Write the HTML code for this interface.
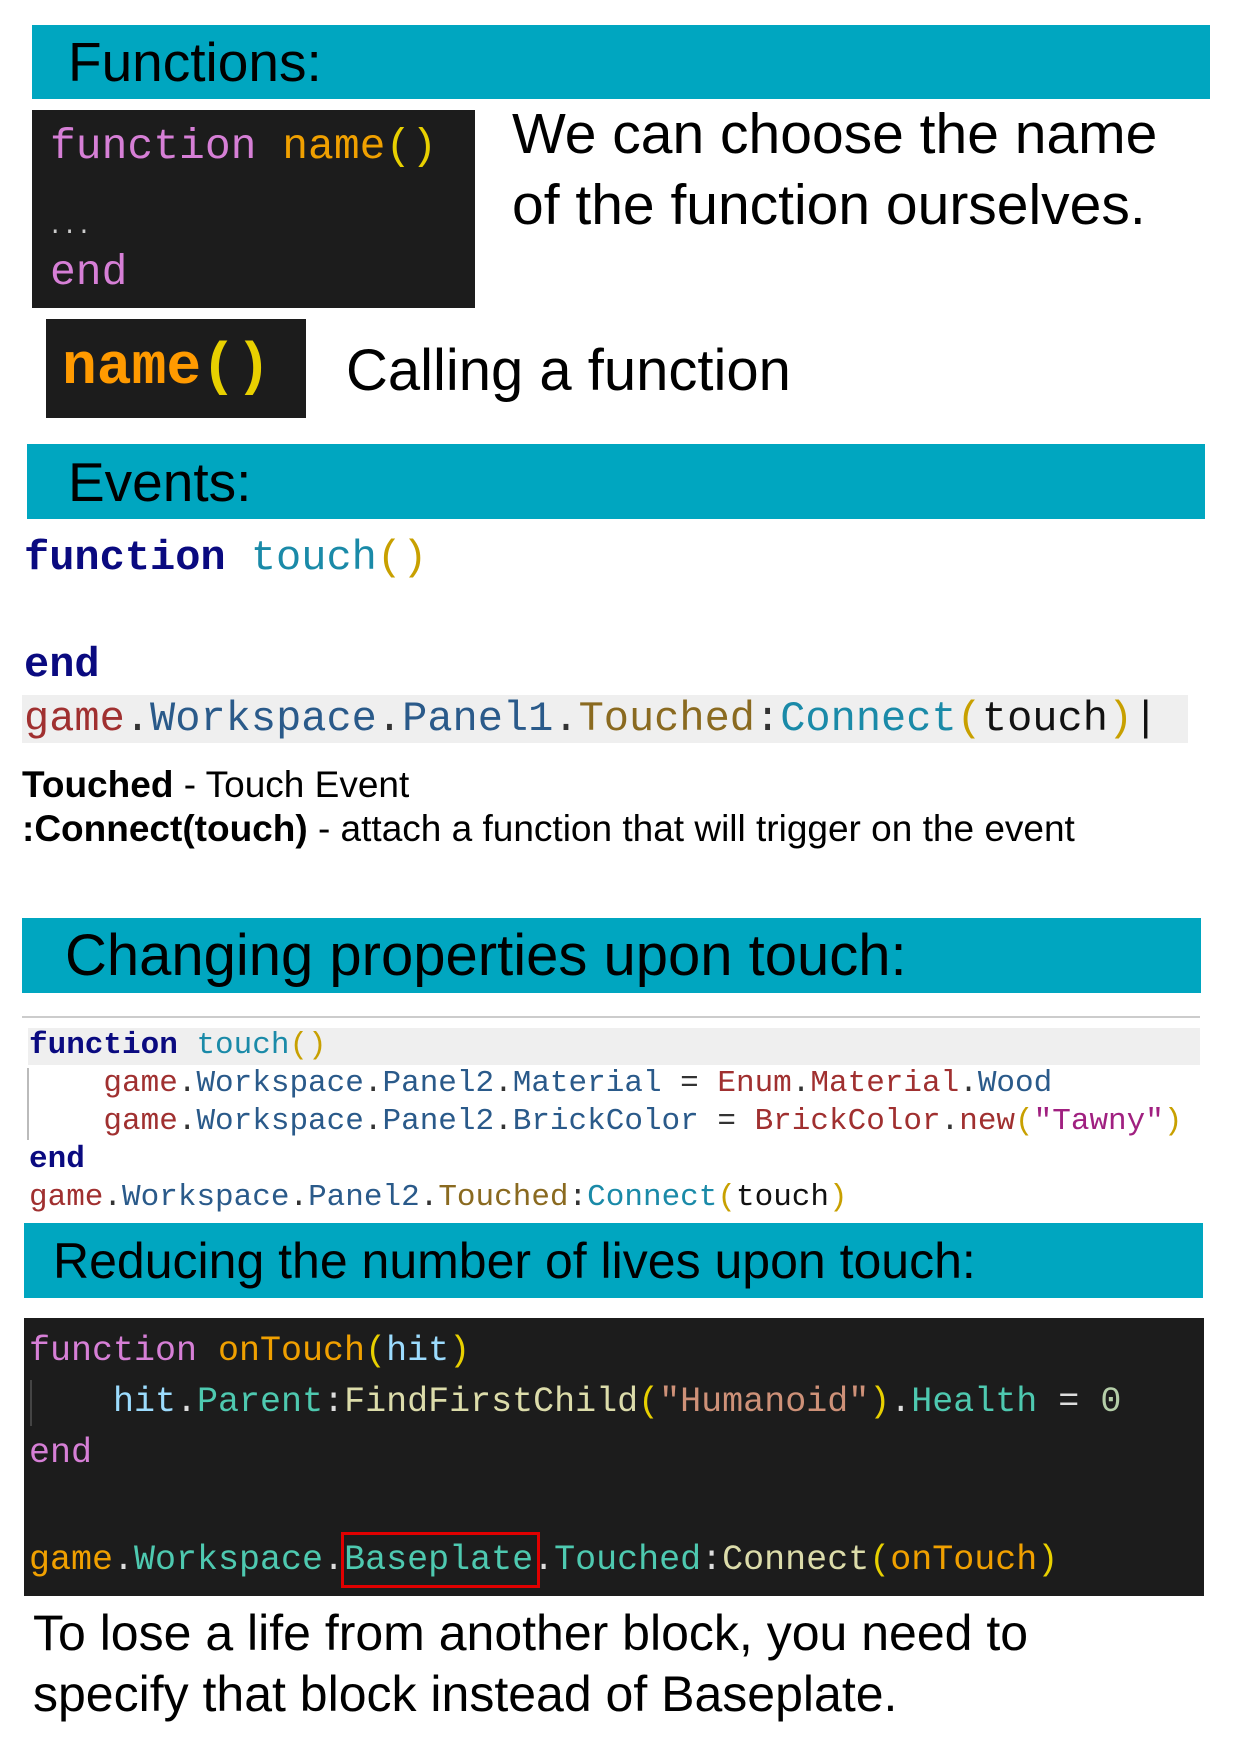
<!DOCTYPE html>
<html><head><meta charset="utf-8"><style>
body{margin:0;width:1240px;height:1748px;background:#fff;position:relative;overflow:hidden;font-family:"Liberation Sans",Arial,sans-serif;}
.a{position:absolute;white-space:pre;}
.ban{position:absolute;background:#00a6c0;}
.m{font-family:"Liberation Mono",monospace;}
.d{background:#1c1c1c;position:absolute;}
</style></head><body>
<div class="ban" style="left:32px;top:25px;width:1178px;height:74px"></div>
<div class="a" style="left:68px;top:30px;font-size:55px;line-height:64px">Functions:</div>

<div class="d" style="left:32px;top:110px;width:443px;height:198px"></div>
<div class="a m" style="left:50px;top:122px;font-size:43px;line-height:50px;color:#d67fd6">function <span style="color:#f0a000">name</span><span style="color:#e8d000">()</span></div>
<div class="a m" style="left:48px;top:216px;font-size:24px;line-height:24px;color:#ccc">...</div>
<div class="a m" style="left:50px;top:248px;font-size:43px;line-height:50px;color:#d67fd6">end</div>
<div class="a" style="left:512px;top:99px;font-size:57px;line-height:71px">We can choose the name
of the function ourselves.</div>

<div class="d" style="left:46px;top:319px;width:260px;height:99px"></div>
<div class="a m" style="left:62px;top:338px;font-size:58px;line-height:62px;color:#ff9a00;font-weight:bold">name<span style="color:#e8d000">()</span></div>
<div class="a" style="left:346px;top:338px;font-size:58px;line-height:66px">Calling a function</div>

<div class="ban" style="left:27px;top:444px;width:1178px;height:75px"></div>
<div class="a" style="left:68px;top:450px;font-size:55px;line-height:64px">Events:</div>

<div class="a m" style="left:24px;top:533px;font-size:42px;line-height:50px;font-weight:bold;color:#0a0a80">function <span style="font-weight:normal;color:#1a8aa8">touch</span><span style="font-weight:normal;color:#c8a000">()</span></div>
<div class="a m" style="left:24px;top:640px;font-size:42px;line-height:50px;font-weight:bold;color:#0a0a80">end</div>
<div class="a" style="left:22px;top:695px;width:1166px;height:48px;background:#efefef"></div>
<div class="a m" style="left:24px;top:694px;font-size:42px;line-height:50px;color:#a03030"><span>game</span><span style="color:#333">.</span><span style="color:#2a5a8a">Workspace</span><span style="color:#333">.</span><span style="color:#2a5a8a">Panel1</span><span style="color:#333">.</span><span style="color:#8a6a20">Touched</span><span style="color:#333">:</span><span style="color:#1a8aa8">Connect</span><span style="color:#c8a000">(</span><span style="color:#111">touch</span><span style="color:#c8a000">)</span><span style="color:#111">|</span></div>
<div class="a" style="left:22px;top:764px;font-size:37px;line-height:42px"><b>Touched</b> - Touch Event</div>
<div class="a" style="left:22px;top:808px;font-size:37px;line-height:42px"><b>:Connect(touch)</b> - attach a function that will trigger on the event</div>

<div class="ban" style="left:22px;top:918px;width:1179px;height:75px"></div>
<div class="a" style="left:65px;top:923px;font-size:58px;line-height:66px">Changing properties upon touch:</div>

<div class="a" style="left:22px;top:1016px;width:1178px;height:2px;background:#ccc"></div>
<div class="a" style="left:28px;top:1028px;width:1172px;height:37px;background:#efefef"></div>
<div class="a" style="left:27px;top:1068px;width:2px;height:72px;background:#bbb"></div>
<div class="a m" style="left:29px;top:1027px;font-size:31px;line-height:38px;color:#a03030"><span style="color:#0a0a80;font-weight:bold">function</span> <span style="color:#1a8aa8">touch</span><span style="color:#c8a000">()</span>
    game<span style="color:#333">.</span><span style="color:#2a5a8a">Workspace</span><span style="color:#333">.</span><span style="color:#2a5a8a">Panel2</span><span style="color:#333">.</span><span style="color:#2a5a8a">Material</span> <span style="color:#333">=</span> Enum<span style="color:#333">.</span>Material<span style="color:#333">.</span><span style="color:#2a5a8a">Wood</span>
    game<span style="color:#333">.</span><span style="color:#2a5a8a">Workspace</span><span style="color:#333">.</span><span style="color:#2a5a8a">Panel2</span><span style="color:#333">.</span><span style="color:#2a5a8a">BrickColor</span> <span style="color:#333">=</span> BrickColor<span style="color:#333">.</span>new<span style="color:#c8a000">(</span><span style="color:#a02080">"Tawny"</span><span style="color:#c8a000">)</span>
<span style="color:#0a0a80;font-weight:bold">end</span>
game<span style="color:#333">.</span><span style="color:#2a5a8a">Workspace</span><span style="color:#333">.</span><span style="color:#2a5a8a">Panel2</span><span style="color:#333">.</span><span style="color:#8a6a20">Touched</span><span style="color:#333">:</span><span style="color:#1a8aa8">Connect</span><span style="color:#c8a000">(</span><span style="color:#111">touch</span><span style="color:#c8a000">)</span></div>

<div class="ban" style="left:24px;top:1223px;width:1179px;height:75px"></div>
<div class="a" style="left:53px;top:1231px;font-size:50px;line-height:60px">Reducing the number of lives upon touch:</div>

<div class="d" style="left:24px;top:1318px;width:1180px;height:278px"></div>
<div class="a" style="left:30px;top:1380px;width:2px;height:46px;background:#444"></div>
<div class="a m" style="left:29px;top:1326px;font-size:35px;line-height:51px;color:#d67fd6">function <span style="color:#f0a000">onTouch</span><span style="color:#e8d000">(</span><span style="color:#9cdcfe">hit</span><span style="color:#e8d000">)</span>
    <span style="color:#9cdcfe">hit</span><span style="color:#ddd">.</span><span style="color:#4ec9b0">Parent</span><span style="color:#ddd">:</span><span style="color:#dcdcaa">FindFirstChild</span><span style="color:#e8d000">(</span><span style="color:#ce9178">"Humanoid"</span><span style="color:#e8d000">)</span><span style="color:#ddd">.</span><span style="color:#4ec9b0">Health</span> <span style="color:#ddd">=</span> <span style="color:#b5cea8">0</span>
end</div>
<div class="a m" style="left:29px;top:1535px;font-size:35px;line-height:51px;color:#f0a000">game<span style="color:#ddd">.</span><span style="color:#4ec9b0">Workspace</span><span style="color:#ddd">.</span><span style="color:#4ec9b0">Baseplate</span><span style="color:#ddd">.</span><span style="color:#4ec9b0">Touched</span><span style="color:#ddd">:</span><span style="color:#dcdcaa">Connect</span><span style="color:#e8d000">(</span>onTouch<span style="color:#e8d000">)</span></div>
<div class="a" style="left:341px;top:1532px;width:193px;height:50px;border:3px solid #e00000"></div>

<div class="a" style="left:33px;top:1603px;font-size:50px;line-height:61px">To lose a life from another block, you need to
specify that block instead of Baseplate.</div>
</body></html>
